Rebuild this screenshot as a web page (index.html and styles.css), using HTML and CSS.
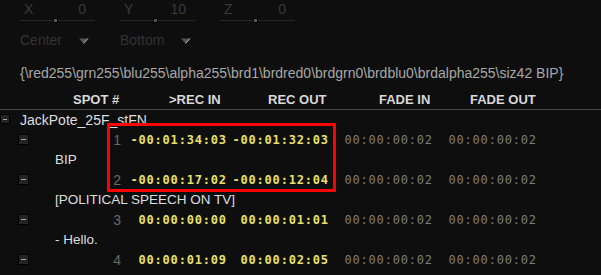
FILE: index.html
```html
<!DOCTYPE html>
<html lang="en">
<head>
    <meta charset="UTF-8">
    <title>Subtitle Editor</title>
    <link rel="stylesheet" href="styles.css">
</head>
<body>
    <div class="controls">
        <div class="sliders">
            <div class="slider">
                <div class="slider-head"><span>X</span><span>0</span></div>
                <div class="track"><span class="knob"></span></div>
            </div>
            <div class="slider">
                <div class="slider-head"><span>Y</span><span>10</span></div>
                <div class="track"><span class="knob"></span></div>
            </div>
            <div class="slider">
                <div class="slider-head"><span>Z</span><span>0</span></div>
                <div class="track"><span class="knob"></span></div>
            </div>
        </div>
        <div class="drops">
            <div class="drop">Center <svg class="arrow" width="10" height="6" viewBox="0 0 10 6"><path d="M0 0.5H9L4.5 5.5Z" fill="#555"/><path d="M9 0.5L4.5 5.5" stroke="#bbb" stroke-width="1"/></svg></div>
            <div class="drop">Bottom <svg class="arrow" width="10" height="6" viewBox="0 0 10 6"><path d="M0 0.5H9L4.5 5.5Z" fill="#555"/><path d="M9 0.5L4.5 5.5" stroke="#bbb" stroke-width="1"/></svg></div>
        </div>
    </div>

    <div class="code">{\red255\grn255\blu255\alpha255\brd1\brdred0\brdgrn0\brdblu0\brdalpha255\siz42 BIP}</div>

    <div class="head">
        <span></span>
        <span>SPOT #</span>
        <span>&gt;REC IN</span>
        <span>REC OUT</span>
        <span>FADE IN</span>
        <span>FADE OUT</span>
    </div>

    <div class="tree">
        <div class="root"><span class="toggle small"></span>JackPote_25F_stFN</div>

        <div class="row">
            <span class="toggle"></span>
            <span class="num">1</span>
            <span class="time">-00:01:34:03</span>
            <span class="time">-00:01:32:03</span>
            <span class="fade">00:00:00:02</span>
            <span class="fade">00:00:00:02</span>
        </div>
        <div class="line">BIP</div>

        <div class="row">
            <span class="toggle"></span>
            <span class="num">2</span>
            <span class="time">-00:00:17:02</span>
            <span class="time">-00:00:12:04</span>
            <span class="fade">00:00:00:02</span>
            <span class="fade">00:00:00:02</span>
        </div>
        <div class="line">[POLITICAL SPEECH ON TV]</div>

        <div class="row">
            <span class="toggle"></span>
            <span class="num">3</span>
            <span class="time">00:00:00:00</span>
            <span class="time">00:00:01:01</span>
            <span class="fade">00:00:00:02</span>
            <span class="fade">00:00:00:02</span>
        </div>
        <div class="line">- Hello.</div>

        <div class="row">
            <span class="toggle"></span>
            <span class="num">4</span>
            <span class="time">00:00:01:09</span>
            <span class="time">00:00:02:05</span>
            <span class="fade">00:00:00:02</span>
            <span class="fade">00:00:00:02</span>
        </div>
    </div>

    <div class="highlight"></div>
</body>
</html>
```

FILE: styles.css
```css
body {
    margin: 0;
    background-color: #0e0e0e;
    font-family: "Liberation Sans", Arial, sans-serif;
    font-size: 13px;
    width: 601px;
    height: 275px;
    overflow: hidden;
    position: relative;
}
.controls {
    padding: 2px 0 0 20px;
    color: #3a3a3a;
    font-size: 14px;
}
.sliders {
    display: flex;
    gap: 25px;
}
.slider {
    width: 75px;
}
.slider-head {
    display: flex;
    justify-content: space-between;
    padding: 0 9px 0 4px;
    line-height: 15px;
}
.track {
    position: relative;
    height: 1px;
    margin-top: 3px;
    background-color: #262626;
}
.knob {
    position: absolute;
    left: 33px;
    top: -2px;
    width: 3px;
    height: 3px;
    background-color: #555;
    border: 1px solid #000;
}
.drops {
    display: flex;
    margin-top: 12px;
}
.drop {
    width: 100px;
    line-height: 15px;
    color: #333;
}
.arrow {
    margin-left: 13px;
    vertical-align: 1px;
}
.code {
    margin-top: 18px;
    padding-left: 20px;
    color: #a8a8a8;
    font-size: 14px;
    line-height: 15px;
}
.head {
    display: grid;
    grid-template-columns: 73px 96px 99px 111px 91px auto;
    margin-top: 11px;
    padding-bottom: 2px;
    border-bottom: 1px solid #4a4a4a;
    color: #d8d8d8;
    font-weight: bold;
    font-size: 13px;
    line-height: 15px;
}
.tree {
    color: #dedede;
}
.root {
    display: flex;
    align-items: center;
    gap: 10px;
    height: 20px;
    font-size: 14px;
}
.toggle {
    position: relative;
    display: inline-block;
    width: 11px;
    height: 11px;
    background-color: #242424;
    border: 1px solid #000;
    box-sizing: border-box;
}
.toggle::after {
    content: "";
    position: absolute;
    left: 2px;
    right: 2px;
    top: 4px;
    height: 1px;
    background-color: #aaa;
}
.toggle.small {
    width: 10px;
    height: 10px;
    margin-top: -2px;
}
.row {
    display: grid;
    grid-template-columns: 18px 11px 92px 105px 102px 104px 104px;
    align-items: center;
    height: 19px;
}
.row .toggle {
    grid-column: 2;
}
.num {
    text-align: right;
    color: #686868;
    font-size: 14px;
}
.time, .fade {
    text-align: right;
    font-family: "DejaVu Sans Mono", monospace;
    font-size: 12px;
    letter-spacing: 0.8px;
    margin-right: -0.8px;
}
.time {
    color: #e8e06c;
    font-weight: bold;
}
.fade {
    color: #7c7c7c;
}
.line {
    padding-left: 55px;
    height: 21px;
    line-height: 21px;
    font-size: 13.5px;
}
.highlight {
    position: absolute;
    left: 107px;
    top: 123px;
    width: 223px;
    height: 63px;
    border: 3px solid #ff0000;
}
```
